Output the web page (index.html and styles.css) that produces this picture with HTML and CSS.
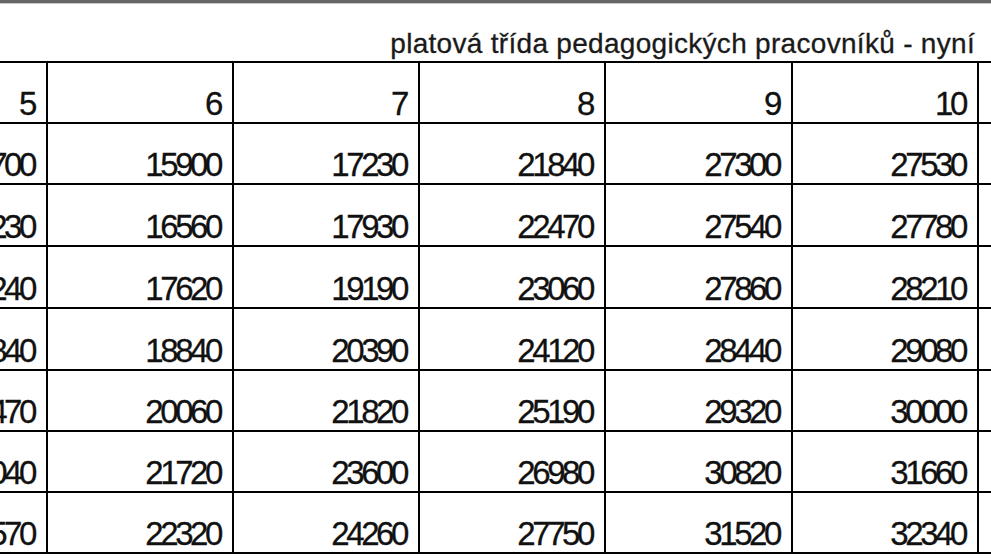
FILE: index.html
```html
<!DOCTYPE html>
<html lang="cs">
<head>
<meta charset="utf-8">
<title>platová třída pedagogických pracovníků</title>
<link rel="stylesheet" href="styles.css">
</head>
<body>
<div class="page">
  <div class="topbar"></div>
  <div class="title">platová třída pedagogických pracovníků - nyní</div>
  <div class="grid">
    <div class="c">5</div><div class="c">6</div><div class="c">7</div><div class="c">8</div><div class="c">9</div><div class="c">10</div><div class="c"></div>
    <div class="c">14700</div><div class="c">15900</div><div class="c">17230</div><div class="c">21840</div><div class="c">27300</div><div class="c">27530</div><div class="c"></div>
    <div class="c">15230</div><div class="c">16560</div><div class="c">17930</div><div class="c">22470</div><div class="c">27540</div><div class="c">27780</div><div class="c"></div>
    <div class="c">16240</div><div class="c">17620</div><div class="c">19190</div><div class="c">23060</div><div class="c">27860</div><div class="c">28210</div><div class="c"></div>
    <div class="c">17840</div><div class="c">18840</div><div class="c">20390</div><div class="c">24120</div><div class="c">28440</div><div class="c">29080</div><div class="c"></div>
    <div class="c">18470</div><div class="c">20060</div><div class="c">21820</div><div class="c">25190</div><div class="c">29320</div><div class="c">30000</div><div class="c"></div>
    <div class="c">20040</div><div class="c">21720</div><div class="c">23600</div><div class="c">26980</div><div class="c">30820</div><div class="c">31660</div><div class="c"></div>
    <div class="c">20570</div><div class="c">22320</div><div class="c">24260</div><div class="c">27750</div><div class="c">31520</div><div class="c">32340</div><div class="c"></div>
  </div>
</div>
</body>
</html>
```

FILE: styles.css
```css
html, body {
  margin: 0;
  padding: 0;
  background: #fff;
  overflow: hidden;
}
.page {
  width: 991px;
  height: 558px;
  overflow: hidden;
  font-family: "Liberation Sans", Arial, sans-serif;
  color: #111;
}
.topbar {
  height: 3px;
  background: #666;
  border-bottom: 1px solid #c8c8c8;
}
.title {
  height: 57px;
  box-sizing: border-box;
  display: flex;
  align-items: flex-end;
  justify-content: flex-end;
  padding-right: 16px;
  font-size: 28px;
  line-height: 28px;
  padding-bottom: 3px;
  letter-spacing: 0.3px;
  color: #1a1a1a;
  -webkit-text-stroke: 0.3px #1a1a1a;
  white-space: nowrap;
}
.grid {
  display: grid;
  width: max-content;
  margin-left: -138px;
  grid-template-columns: 184px 184px 184px 184px 185px 184px 184px;
  grid-template-rows: 59px 59px 60px 60px 60px 59px 59px 59px;
  gap: 2px;
  padding: 2px 0;
  background: #000;
}
.c {
  background: #fff;
  display: flex;
  align-items: flex-end;
  justify-content: flex-end;
  padding: 0 12px 2px 0;
  font-size: 33px;
  line-height: 33px;
  letter-spacing: -3.4px;
  -webkit-text-stroke: 0.3px #111;
  white-space: nowrap;
}
```
